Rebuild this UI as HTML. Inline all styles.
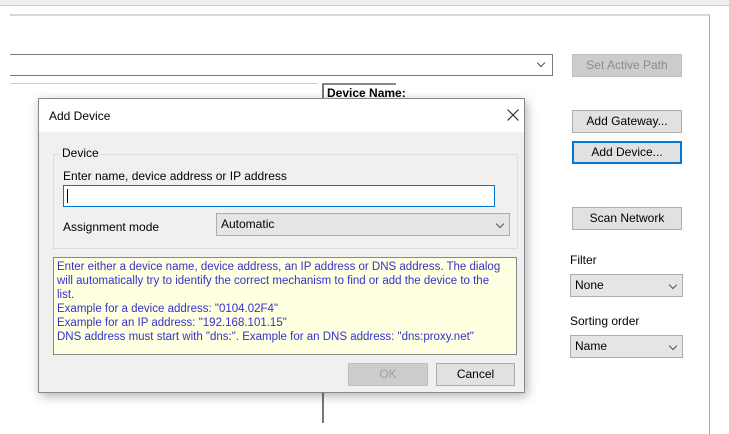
<!DOCTYPE html>
<html><head><style>
*{box-sizing:border-box;margin:0;padding:0}
body{width:729px;height:434px;background:#fff;position:relative;overflow:hidden;font-family:"Liberation Sans",sans-serif;font-size:12px;color:#000}
.a{position:absolute}
.btn{position:absolute;background:#e1e1e1;border:1px solid #adadad;text-align:center;font-size:12px;line-height:20px}
.cb{position:absolute;background:#e5e5e5;border:1px solid #adadad;font-size:12px;line-height:20px;padding-left:4px}
.chev{position:absolute;right:6px;top:7px;width:6px;height:6px;border-right:1px solid #555;border-bottom:1px solid #555;transform:rotate(45deg)}
</style></head><body>
<div class="a" style="left:0;top:0;width:729px;height:6px;background:#f0f0f0;border-bottom:1px solid #ccc"></div>
<div class="a" style="left:10px;top:14px;width:700px;height:420px;border-top:2px solid #d9d9d9;border-right:1px solid #aaa"></div>
<div class="a" style="left:10px;top:54px;width:543px;height:22px;border:1px solid #7a7a7a;border-left:none;background:#fff"><div class="chev" style="top:5px;right:8px"></div></div>
<div class="btn" style="left:572px;top:54px;width:110px;height:23px;color:#8c8c8c;background:#ccc;border-color:#bfbfbf">Set Active Path</div>
<div class="a" style="left:10px;top:83px;width:308px;height:340px;border-top:1px solid #ccc;background:#fff"></div>
<div class="a" style="left:322px;top:83px;width:74px;height:340px;border-left:2px solid #777;border-top:2px solid #888;background:#fff"></div>
<div class="a" style="left:327px;top:86px;font-weight:bold;font-size:12px">Device Name:</div>
<div class="btn" style="left:572px;top:110px;width:110px;height:23px">Add Gateway...</div>
<div class="btn" style="left:572px;top:141px;width:110px;height:23px;border:2px solid #0078d7;line-height:19px">Add Device...</div>
<div class="btn" style="left:572px;top:207px;width:110px;height:23px">Scan Network</div>
<div class="a" style="left:570px;top:253px">Filter</div>
<div class="cb" style="left:570px;top:274px;width:113px;height:23px">None<div class="chev"></div></div>
<div class="a" style="left:570px;top:314px">Sorting order</div>
<div class="cb" style="left:570px;top:335px;width:113px;height:23px">Name<div class="chev"></div></div>

<div class="a" style="left:38px;top:98px;width:487px;height:295px;background:#f0f0f0;border:1px solid #888;box-shadow:2px 3px 10px rgba(0,0,0,.3)">
 <div class="a" style="left:0;top:0;width:485px;height:33px;background:#fff"></div>
 <div class="a" style="left:10px;top:10px;font-size:12px">Add Device</div>
 <svg class="a" style="left:468px;top:10px" width="12" height="12"><path d="M0.5 0.5L11.5 11.5M11.5 0.5L0.5 11.5" stroke="#222" stroke-width="1"/></svg>
 <div class="a" style="left:14px;top:55px;width:465px;height:95px;border:1px solid #dcdcdc"></div>
 <div class="a" style="left:20px;top:47px;background:#f0f0f0;padding:0 3px">Device</div>
 <div class="a" style="left:24px;top:70px">Enter name, device address or IP address</div>
 <div class="a" style="left:24px;top:86px;width:432px;height:22px;background:#fff;border:1px solid #0078d7"><div class="a" style="left:3px;top:3px;width:1px;height:14px;background:#000"></div></div>
 <div class="a" style="left:24px;top:121px">Assignment mode</div>
 <div class="cb" style="left:177px;top:114px;width:294px;height:23px;background:#e5e5e5">Automatic<div class="chev"></div></div>
 <div class="a" style="left:14px;top:158px;width:464px;height:98px;background:#ffffe1;border:1px solid #888;color:#3333cc;font-size:11.5px;line-height:14px;padding:2px 10px 2px 3px">Enter either a device name, device address, an IP address or DNS address. The dialog will automatically try to identify the correct mechanism to find or add the device to the list.<br>Example for a device address: "0104.02F4"<br>Example for an IP address: "192.168.101.15"<br>DNS address must start with "dns:". Example for an DNS address: "dns:proxy.net"</div>
 <div class="btn" style="left:309px;top:264px;width:80px;height:23px;color:#a0a0a0;background:#ccc;border-color:#bfbfbf">OK</div>
 <div class="btn" style="left:397px;top:264px;width:79px;height:23px">Cancel</div>
</div>
</body></html>
